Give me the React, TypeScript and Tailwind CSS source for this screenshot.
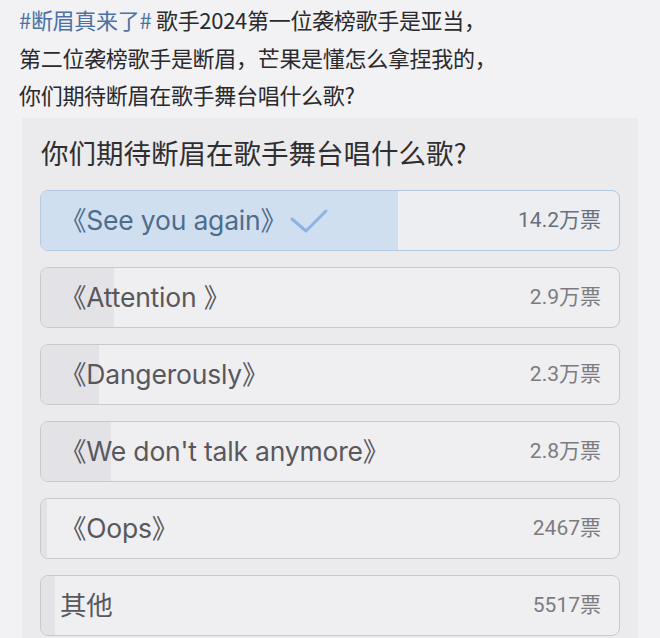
import React from "react";

type Opt = { label: string; count: string; votes: number; selected?: boolean };

const options: Opt[] = [
  { label: "《See you again》", count: "14.2万票", votes: 142000, selected: true },
  { label: "《Attention 》", count: "2.9万票", votes: 29000 },
  { label: "《Dangerously》", count: "2.3万票", votes: 23000 },
  { label: "《We don't talk anymore》", count: "2.8万票", votes: 28000 },
  { label: "《Oops》", count: "2467票", votes: 2467 },
  { label: "其他", count: "5517票", votes: 5517 },
];

const total = options.reduce((s, o) => s + o.votes, 0);

function Check() {
  return (
    <svg width="40" height="28" viewBox="0 0 40 28" className="ml-[2px] shrink-0">
      <path d="M3 12 L17 24 L37 4" fill="none" stroke="#8db3e2" strokeWidth="3" strokeLinecap="round" strokeLinejoin="round" />
    </svg>
  );
}

export default function App() {
  return (
    <div className="w-[660px] h-[638px] overflow-hidden bg-[#f2f1f3] font-['Noto_Sans_CJK_SC',sans-serif]">
      <div className="pl-[19px] pt-[1px] text-[22px] leading-[37.5px] tracking-[-0.3px] text-[#2a2a2c]">
        <div>
          <span className="text-[#4b71a5]">#断眉真来了#</span> 歌手2024第一位袭榜歌手是亚当，
        </div>
        <div>第二位袭榜歌手是断眉，芒果是懂怎么拿捏我的，</div>
        <div>你们期待断眉在歌手舞台唱什么歌?</div>
      </div>
      <div className="ml-[22px] mr-[22px] mt-[4px] h-[600px] bg-[#ebeaed] px-[18px] pt-[14px]">
        <div className="pl-[1px] text-[27.5px] leading-[40px] text-[#2f2f31]">你们期待断眉在歌手舞台唱什么歌?</div>
        <div className="mt-[18px] flex flex-col gap-[16px]">
          {options.map((o) => {
            const pct = (o.votes / total) * 100;
            return (
              <div
                key={o.label}
                className={
                  o.selected
                    ? "relative h-[61px] overflow-hidden rounded-[8px] border-[1.5px] border-[#b3c9df] bg-[#edeef2]"
                    : "relative h-[61px] overflow-hidden rounded-[8px] border-[1.5px] border-[#c9c8cc] bg-[#efeef1]"
                }
              >
                <div
                  className={o.selected ? "absolute inset-y-0 left-0 bg-[#cfdff0]" : "absolute inset-y-0 left-0 bg-[#e3e2e6]"}
                  style={{ width: `${pct}%` }}
                />
                <div className="relative flex h-full items-center justify-between pl-[19px] pr-[18px] pt-[2px]">
                  <div className="flex items-center">
                    <span
                      className={
                        o.selected
                          ? "font-['Inter','Noto_Sans_CJK_SC',sans-serif] text-[26.5px] tracking-[-0.2px] text-[#4e6c8c]"
                          : "font-['Inter','Noto_Sans_CJK_SC',sans-serif] text-[26.5px] tracking-[-0.2px] text-[#58585c]"
                      }
                    >
                      {o.label}
                    </span>
                    {o.selected && <Check />}
                  </div>
                  <span
                    className={
                      o.selected
                        ? "font-['Roboto','Noto_Sans_CJK_SC',sans-serif] text-[21px] text-[#66717d]"
                        : "font-['Roboto','Noto_Sans_CJK_SC',sans-serif] text-[21px] text-[#7c7c80]"
                    }
                  >
                    {o.count}
                  </span>
                </div>
              </div>
            );
          })}
        </div>
      </div>
    </div>
  );
}
